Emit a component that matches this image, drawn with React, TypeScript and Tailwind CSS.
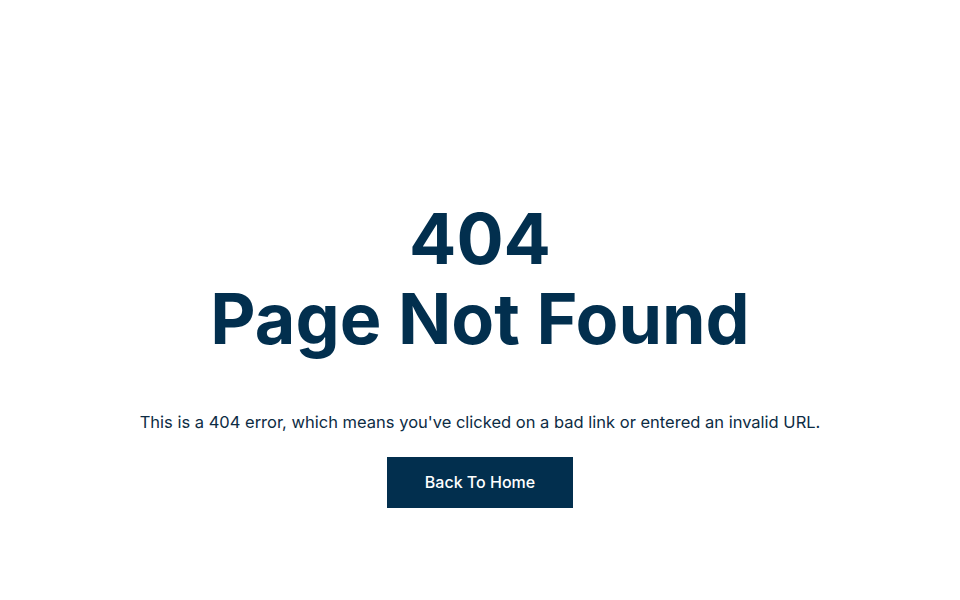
import React from "react";

export default function App() {
  return (
    <div className="flex h-[600px] w-full flex-col items-center justify-center bg-white pt-[96px] text-[#022f4e] font-['Inter',sans-serif]">
      <h1 className="mt-[11px] text-center text-[70px] font-bold leading-[80px]">
        404
        <br />
        Page Not Found
      </h1>
      <p className="mt-[51px] text-[16.5px] text-[#0d2c44]">
        This is a 404 error, which means you've clicked on a bad link or entered an invalid URL.
      </p>
      <a
        href="#"
        className="mt-[22px] flex h-[51px] w-[186px] items-center justify-center bg-[#022f4e] text-[16px] font-medium text-white"
      >
        Back To Home
      </a>
    </div>
  );
}
